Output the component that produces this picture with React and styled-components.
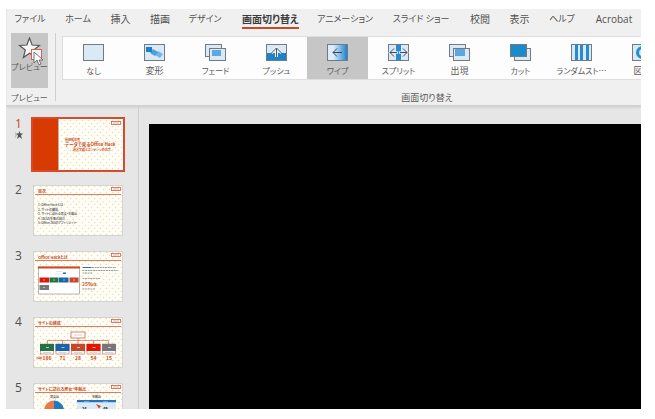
import React from "react";
import styled, { createGlobalStyle } from "styled-components";

const GlobalStyle = createGlobalStyle`
  * { box-sizing: border-box; }
  body { margin: 0; background: #fff; color: #5a5a5a; font-family: "Noto Sans CJK JP", "Open Sans", sans-serif; }
  button { border: 0; margin: 0; padding: 0; background: none; color: inherit; font: inherit; font-feature-settings: "palt"; white-space: nowrap; }
  svg { display: block; }
`;

const Window = styled.main`
  display: flex;
  flex-direction: column;
  height: calc(100vh - 19px);
  margin: 9px 14px 10px 6px;
  overflow: hidden;
  background: #e6e6e6;
`;
const Ribbon = styled.header`
  flex: none;
  background: #f1f0f0;
  border-left: 1px solid #e6e6e6;
  border-bottom: 1px solid #d0d0d0;
  box-shadow: 0 1px 3px #c8c8c8;
  z-index: 1;
`;
const Tabs = styled.nav`
  display: flex;
  height: 24px;
  overflow: hidden;
`;
const Tab = styled.button`
  flex: none;
  width: ${(p) => p.$width}px;
  height: 20px;
  display: flex;
  justify-content: center;
  font-family: ${(p) => (p.$latin ? '"Open Sans", sans-serif' : "inherit")};
  font-size: ${(p) => p.$size}px;
  line-height: 20px;
  font-weight: ${(p) => (p.$active ? 700 : 400)};
  color: ${(p) => (p.$active ? "#3b3b3b" : "#505050")};
  span { height: 20px; border-bottom: 2px solid ${(p) => (p.$active ? "#c84a25" : "transparent")}; }
`;
const Tools = styled.div`
  display: flex;
  height: 72px;
`;
const PreviewGroup = styled.section`
  flex: none;
  width: 49px;
  margin-bottom: 4px;
  padding-left: 4px;
  border-right: 1px solid #d0d0d0;
`;
const PreviewButton = styled.button`
  position: relative;
  display: flex;
  flex-direction: column;
  align-items: center;
  width: 37px;
  height: 55px;
  padding-top: 4px;
  background: #c6c6c6;
  font-size: 8px;
  line-height: 14px;
`;
const Cursor = styled.svg`
  position: absolute;
  left: 20px;
  top: 16px;
`;
const GroupName = styled.div`
  padding-top: ${(p) => (p.$wide ? 11 : 3)}px;
  text-align: center;
  font-size: ${(p) => (p.$wide ? 9 : 8)}px;
  line-height: 14px;
  font-feature-settings: "palt";
  width: ${(p) => (p.$wide ? "auto" : "37px")};
  white-space: nowrap;
`;
const TransitionGroup = styled.section`
  flex: 1 0 736px;
  padding: 3px 0 0 6px;
`;
const Gallery = styled.div`
  display: flex;
  height: 44px;
  overflow: hidden;
  background: #fdfdfd;
  border: 1px solid #dedede;
  border-right: 0;
`;
const Transition = styled.button`
  flex: none;
  display: flex;
  flex-direction: column;
  align-items: center;
  width: 61px;
  padding-top: 7px;
  gap: 3px;
  background: ${(p) => (p.$active ? "#c6c6c6" : "transparent")};
  font-size: ${(p) => (p.$kana ? 8 : 9)}px;
  line-height: 14px;
`;
const Workspace = styled.div`
  display: flex;
  flex: 1;
  min-height: 0;
`;
const SlideList = styled.aside`
  flex: none;
  width: 133px;
  padding: 12px 0 0 9px;
  border-right: 1px solid #cecece;
  overflow: hidden;
`;
const SlideRow = styled.button`
  display: flex;
  width: 100%;
  height: 66px;
  text-align: left;
`;
const SlideNumber = styled.span`
  width: 18px;
  font-family: "Open Sans", sans-serif;
  font-size: 12px;
  line-height: 12px;
  color: ${(p) => (p.$active ? "#cf4326" : "#505050")};
  svg { margin-top: 1px; }
`;
const Thumb = styled.svg`
  flex: none;
  outline: ${(p) => (p.$active ? "2px solid #d84a2b" : "1px solid #d4d4d4")};
  outline-offset: ${(p) => (p.$active ? 0 : -1)}px;
  margin-top: 1px;
  background: #fffefa;
  font-family: "Noto Sans CJK JP", sans-serif;
`;
const Stage = styled.section`
  flex: 1;
  min-width: 0;
  padding: 18px 0 0 10px;
  display: flex;
`;
const Canvas = styled.div`
  flex: 1;
  background: #000;
`;

const tabs = [
  ["ファイル", 46, 9], ["ホーム", 50, 9], ["挿入", 35, 10], ["描画", 44, 10], ["デザイン", 46, 9],
  ["画面切り替え", 85, 10], ["アニメーション", 64, 9], ["スライド ショー", 88, 9],
  ["校閲", 30, 10], ["表示", 49, 10], ["ヘルプ", 36, 9], ["Acrobat", 68, 10],
];

const Frame = ({ x = 0, y = 0, w = 21, h = 17, fill = "#dbe8f6" }) => (
  <rect x={x + 0.5} y={y + 0.5} width={w - 1} height={h - 1} fill={fill} stroke="#737a80" />
);

const icons = {
  none: <Frame />,
  morph: (
    <>
      <Frame />
      <path d="M14 7l5 3-3 4-5-3z" fill="#74b6ea" />
      <path d="M9 5l5 3-3 4-5-3z" fill="#4ba0e0" />
      <path d="M2 3h6v5H2z" fill="#1c80cb" />
    </>
  ),
  fade: (
    <>
      <Frame w={17} h={13} />
      <Frame x={4} y={4} w={17} h={13} />
      <path d="M7 6h9v6H7z" fill="#5aa8e5" />
    </>
  ),
  push: (
    <>
      <Frame />
      <path d="M1 9h19v7H1z" fill="#1c83ca" />
      <path d="M10.500 13V4M5.500 9l5-5 5 5" fill="none" stroke="#e8f2fb" strokeWidth="3" />
      <path d="M10.500 13V4M5.500 9l5-5 5 5" fill="none" stroke="#4d5963" />
    </>
  ),
  wipe: (
    <>
      <Frame fill="url(#wipeBlue)" />
      <path d="M15 8.500H6M10 4.500l-4 4 4 4" fill="none" stroke="#354653" />
    </>
  ),
  split: (
    <>
      <Frame />
      <path d="M8 1h5v15H8z" fill="#278bd3" />
      <path d="M10 8.500H2M6 4.500l-4 4 4 4M11 8.500h8M15 4.500l4 4-4 4" fill="none" stroke="#dbe8f6" strokeWidth="2.500" />
      <path d="M9 8.500H2M6 4.500l-4 4 4 4M12 8.500h7M15 4.500l4 4-4 4" fill="none" stroke="#3e4e5a" />
    </>
  ),
  appear: (
    <>
      <Frame w={17} h={13} />
      <Frame x={4} y={4} w={17} h={13} />
      <path d="M6 5h10v7H6z" fill="#5ba7e0" />
    </>
  ),
  cut: (
    <>
      <Frame x={4} y={4} w={17} h={13} />
      <Frame w={17} h={13} fill="#198aca" />
    </>
  ),
  bars: (
    <>
      <Frame />
      <path d="M4 1h3v15H4zM9 1h3v15H9zM15 1h3v15h-3z" fill="#248cd2" />
    </>
  ),
  shape: (
    <>
      <Frame />
      <circle cx="10.500" cy="8.500" r="5" fill="none" stroke="#248cd2" strokeWidth="3" />
    </>
  ),
};

const transitions = [
  ["なし", "none", true], ["変形", "morph"], ["フェード", "fade", true], ["プッシュ", "push", true],
  ["ワイプ", "wipe", true], ["スプリット", "split", true], ["出現", "appear"], ["カット", "cut", true],
  ["ランダムスト…", "bars", true], ["図形", "shape"],
];

const Badge = () => (
  <>
    <rect x="78.500" y="2.500" width="9" height="3" fill="#fff" stroke="#d45b41" strokeWidth="0.800" />
    <path d="M80 4h6" stroke="#e5a99a" strokeWidth="1" />
  </>
);
const Heading = ({ children }) => (
  <>
    <text x="5" y="7.500" fontSize="4" fontWeight="700" fill="#cf4b24">{children}</text>
    <path d="M2 9.500h86" stroke="#d45b3a" strokeWidth="0.800" />
    <Badge />
  </>
);
const Paper = () => <rect width="90" height="51" fill="url(#dots)" />;

const Cover = () => (
  <>
    <Paper />
    <path d="M0 0h25v51H0z" fill="#d83b01" />
    <path d="M25.500 0v51" stroke="#c7b29c" />
    <text x="32" y="22" fontSize="3" fontWeight="700" fill="#cf4b24">運用報告書</text>
    <text x="32" y="27" fontSize="4.500" fontWeight="700" fill="#cf4b24">データで見るOffice Hack</text>
    <text x="39" y="32" fontSize="3" fontWeight="700" fill="#cf4b24">-運営実績とコンテンツの充実-</text>
    <Badge />
  </>
);
const Contents = () => (
  <>
    <Paper />
    <Heading>目次</Heading>
    <g fontSize="3" fontWeight="500" fill="#444">
      <text x="5" y="21">1. Office Hackとは</text>
      <text x="5" y="25.500">2. サイトの構成</text>
      <text x="5" y="30">3. サイトに訪れる男女・年齢比</text>
      <text x="5" y="34.500">4. SNSの集客の割合</text>
      <text x="5" y="39">5. Office 365のアフィリエイト</text>
    </g>
  </>
);
const About = () => (
  <>
    <Paper />
    <Heading>Office Hackとは</Heading>
    <rect x="5.500" y="16" width="41" height="27" fill="#fff" stroke="#999" strokeWidth="0.700" />
    <path d="M5 15.500h42v2H5z" fill="#d44722" />
    <path d="M23 20.500h6M22 23h7" stroke="#ccc" strokeWidth="0.500" />
    <path d="M30 21.500h3v1.500h-3z" fill="#2567b5" />
    <path d="M6.500 26.500h9.500v5H6.500z" fill="#e51400" />
    <path d="M16.500 26.500h9v5h-9z" fill="#217346" />
    <path d="M26 26.500h9.500v5H26z" fill="#1764ab" />
    <path d="M36.500 26.500h9v5h-9z" fill="#c8452a" />
    <path d="M6.500 34h9.500v5H6.500z" fill="#777" />
    <path d="M10 29h2M20 29h2M30 29h2M40 29h2M10 36.500h2" stroke="#ddd" strokeWidth="0.700" />
    <path d="M49.500 16.500h9" stroke="#2b72bb" />
    <path d="M59 16.500h24M49.500 19.500h35M49.500 22h10M49.500 27.500h18M49.500 38h13" stroke="#888" strokeWidth="0.800" strokeDasharray="2 0.600" />
    <text x="49" y="35" fontSize="5" fontWeight="700" fill="#d05a25">259<tspan fontSize="3">記事</tspan></text>
  </>
);
const colors = ["#217346", "#1764ab", "#c8452a", "#e51400", "#777"];
const counts = ["186", "71", "28", "54", "15"];
const Structure = () => (
  <>
    <Paper />
    <Heading>サイトの構成</Heading>
    <path d="M45 21v6M14.500 27V23.500h61V27M29.500 23.500V27M60.500 23.500V27" fill="none" stroke="#c96a50" strokeWidth="0.700" />
    <rect x="38" y="15" width="14" height="6" fill="#fff" stroke="#c96a50" strokeWidth="0.800" />
    <path d="M41 18h8" stroke="#daa999" strokeWidth="0.600" />
    {colors.map((color, i) => (
      <g key={color} transform={`translate(${7 + i * 15.5} 27)`}>
        <rect x="0.500" y="0" width="13" height="10" fill="#fff" stroke="#c96a50" strokeWidth="0.600" />
        <path d="M0 0h14v7H0z" fill={color} />
        <path d="M6 3.500h3" stroke="#ddd" strokeWidth="0.800" />
        <path d="M3 8.500h8" stroke="#aaa" strokeWidth="0.500" />
        <text x="7" y="16" textAnchor="middle" fontSize="5" fontWeight="700" fill="#cf4b24">{counts[i]}</text>
      </g>
    ))}
    <text x="3" y="42" fontSize="2" fontWeight="700" fill="#cf4b24">記事数</text>
  </>
);
const Audience = () => (
  <>
    <Paper />
    <Heading>サイトに訪れる男女・年齢比</Heading>
    <g fontSize="3" fontWeight="700" fill="#555">
      <text x="17" y="15">男女比</text>
      <text x="59" y="15">年齢比</text>
    </g>
    <path d="M21 17.500a10 10 0 1 1-10 10h10z" fill="#2179be" />
    <path d="M21 17.500v10H11a10 10 0 0 1 10-10z" fill="#e87949" />
    <path d="M44 17h39v2.500H44z" fill="#2374be" />
    <path d="M44 19.500h39V32H44z" fill="#dbeaf6" />
    <path d="M51 18.500h5M70 18.500h5" stroke="#acd0ec" strokeWidth="0.500" />
    <text x="49" y="27" fontSize="4" fontWeight="700" fill="#222">24</text>
    <text x="70" y="27" fontSize="4" fontWeight="700" fill="#222">49</text>
    <path d="M63 21l5 2-2 2.500z" fill="#db4126" />
  </>
);
const slides = [["スライド 1", Cover], ["スライド 2", Contents], ["スライド 3", About], ["スライド 4", Structure], ["スライド 5", Audience]];

const Definitions = () => (
  <svg width="0" height="0" style={{ position: "absolute" }} aria-hidden="true">
    <defs>
      <pattern id="dots" width="6" height="6" patternUnits="userSpaceOnUse">
        <circle cx="1.500" cy="1.500" r="0.800" fill="#e9e48e" />
        <circle cx="4.500" cy="4.500" r="0.800" fill="#f4dca8" />
      </pattern>
      <linearGradient id="wipeBlue"><stop offset="0.300" stopColor="#dcecf9" /><stop offset="1" stopColor="#147fcf" /></linearGradient>
    </defs>
  </svg>
);

export default function App() {
  return (
    <Window>
      <GlobalStyle />
      <Definitions />
      <Ribbon>
        <Tabs>
          {tabs.map(([name, width, size]) => (
            <Tab key={name} $width={width} $size={size} $active={name === "画面切り替え"} $latin={name === "Acrobat"}><span>{name}</span></Tab>
          ))}
        </Tabs>
        <Tools>
          <PreviewGroup>
            <PreviewButton>
              <svg width="23" height="23" viewBox="0 0 23 23" fill="#f7f7f7" stroke="#555" strokeWidth="1.200">
                <path d="M11.500 1l2.600 7 7.400.5-5.800 4.500 1.900 7.500-6.100-4.200-6.100 4.200 1.900-7.500L1.500 8.500l7.400-.5z" />
              </svg>
              <span>プレビュー</span>
              <Cursor width="12" height="17" viewBox="0 0 12 17" aria-hidden="true">
                <rect x="0.500" y="0.500" width="10" height="10" fill="#f7f7f7" stroke="#e45b54" />
                <path d="M3 3v11l3-3 2 5 2-1-2-4h4z" fill="#fff" stroke="#555" strokeWidth="0.800" />
              </Cursor>
            </PreviewButton>
            <GroupName>プレビュー</GroupName>
          </PreviewGroup>
          <TransitionGroup>
            <Gallery>
              {transitions.map(([name, icon, kana]) => (
                <Transition key={name} $active={icon === "wipe"} $kana={kana}>
                  <svg width="21" height="17" viewBox="0 0 21 17" aria-hidden="true">{icons[icon]}</svg>
                  <span>{name}</span>
                </Transition>
              ))}
            </Gallery>
            <GroupName $wide>画面切り替え</GroupName>
          </TransitionGroup>
        </Tools>
      </Ribbon>
      <Workspace>
        <SlideList>
          {slides.map(([label, Drawing], i) => (
            <SlideRow key={label} aria-label={label}>
              <SlideNumber $active={i === 0}>
                {i + 1}
                {i === 0 && (
                  <svg width="8" height="8" viewBox="0 0 8 8" aria-hidden="true">
                    <path d="M4.500 0l1 2.500H8L6 4.500 7 8 4.500 6 2 8l1-3.500L1 2.500h2.500z" fill="#555" />
                    <path d="M0 2h1M0 4h2M0 6h1" stroke="#888" strokeWidth="0.700" />
                  </svg>
                )}
              </SlideNumber>
              <Thumb width="90" height="51" viewBox="0 0 90 51" $active={i === 0}><Drawing /></Thumb>
            </SlideRow>
          ))}
        </SlideList>
        <Stage><Canvas /></Stage>
      </Workspace>
    </Window>
  );
}
